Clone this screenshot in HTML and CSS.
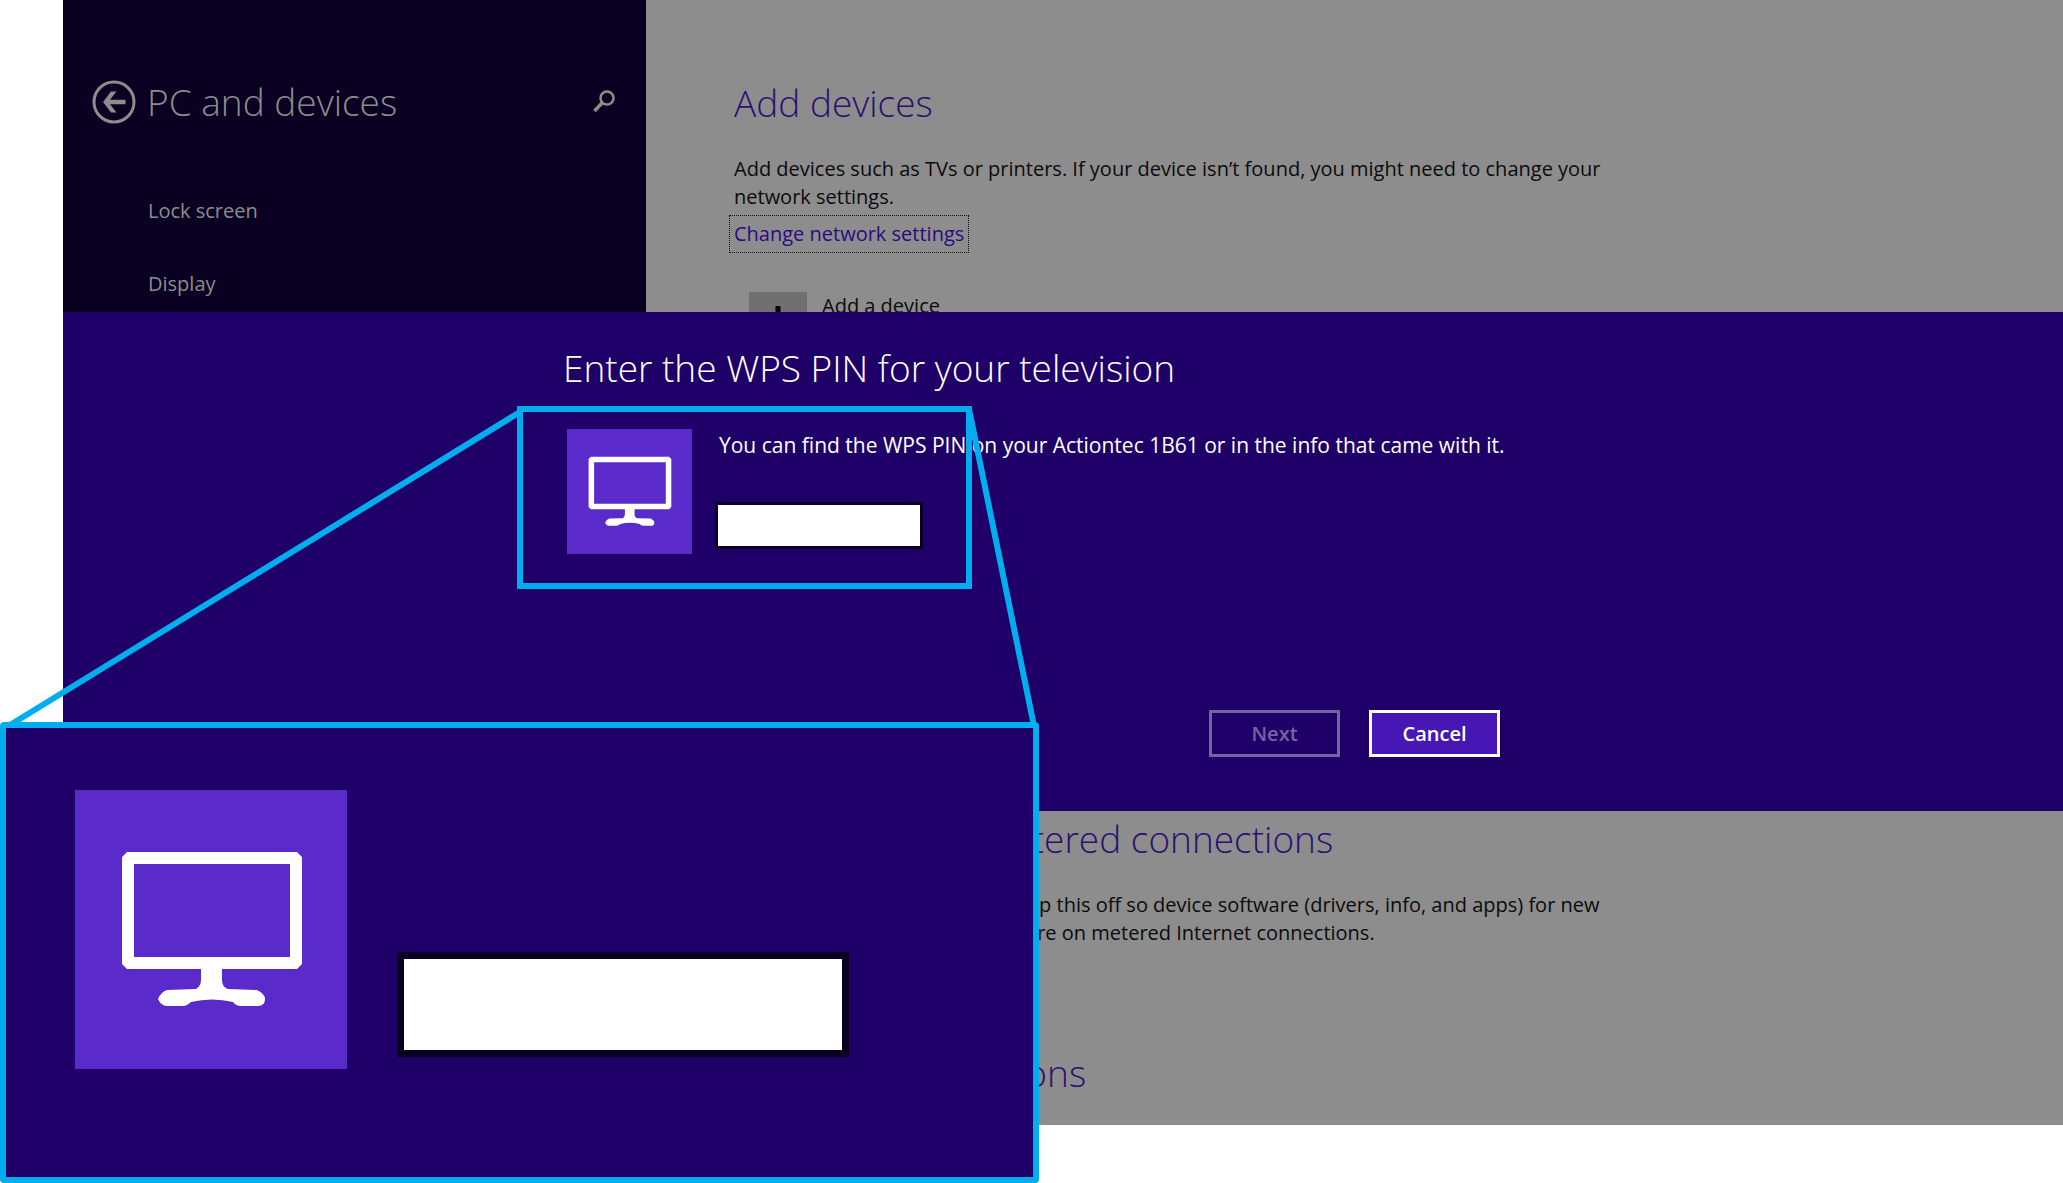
FILE: index.html
```
<!DOCTYPE html>
<html lang="en">
<head>
<meta charset="utf-8">
<title>PC and devices</title>
<link rel="stylesheet" href="styles.css">
</head>
<body>
<svg class="defs" aria-hidden="true">
  <symbol id="monitor" viewBox="0 0 272 279" preserveAspectRatio="none">
    <path fill="#fff" fill-rule="evenodd" d="M52 62H222L227 67V174L222 179H147V190Q147 197 153 199L182 200Q190 204 190 209Q190 216 183 216H166Q161 216 158 212Q137 207 116 212Q112 216 108 216H92Q86 216 83 209Q86 202 92 200L121 199Q126 196 126 190V179H52L47 174V67ZM59 74V167H215V74Z"/>
  </symbol>
</svg>
<div class="page">
  <div class="app">
    <aside class="sidebar">
      <header class="sidebar-head">
        <button class="icon-button" type="button" aria-label="Back">
          <svg width="44" height="44" viewBox="0 0 44 44" fill="none" stroke="currentColor">
            <circle cx="22" cy="22" r="20" stroke-width="3"/>
            <path fill="currentColor" stroke="none" d="M11 22L19 11.500H24.500L18 19.800H33.500V24.200H18L24.500 32.500H19Z"/>
          </svg>
        </button>
        <h1 class="heading">PC and devices</h1>
        <button class="icon-button search" type="button" aria-label="Search">
          <svg width="24" height="24" viewBox="0 0 24 24" fill="none" stroke="currentColor">
            <circle cx="15" cy="8" r="6.500" stroke-width="2.500"/>
            <path stroke-width="3.500" d="M10.500 12.500L2.500 21"/>
          </svg>
        </button>
      </header>
      <nav class="nav">
        <a href="#lock">Lock screen</a>
        <a href="#display">Display</a>
      </nav>
    </aside>
    <main class="content">
      <section>
        <h2 class="heading">Add devices</h2>
        <p>Add devices such as TVs or printers. If your device isn’t found, you might need to change your network settings.</p>
        <a class="link" href="#network">Change network settings</a>
        <button class="add" type="button">
          <span class="plus"><svg width="30" height="30" viewBox="0 0 30 30"><path d="M12.500 0H17.500V12.500H30V17.500H17.500V30H12.500V17.500H0V12.500H12.500Z"/></svg></span>
          <span>Add a device</span>
        </button>
      </section>
      <section class="metered">
        <h2 class="heading">Download over metered connections</h2>
        <p>To help prevent extra charges, keep this off so device software (drivers, info, and apps) for new devices won’t download while you’re on metered Internet connections.</p>
      </section>
      <section class="more">
        <h2 class="heading">Network connections</h2>
      </section>
    </main>
  </div>

  <div class="dialog" role="dialog" aria-labelledby="dialog-title">
    <div class="dialog-body">
      <h2 class="heading" id="dialog-title">Enter the WPS PIN for your television</h2>
      <div class="device">
        <svg class="tile"><use href="#monitor"/></svg>
        <div class="pin">
          <label for="pin">You can find the WPS PIN on your Actiontec 1B61 or in the info that came with it.</label>
          <input id="pin" type="text">
        </div>
      </div>
      <div class="actions">
        <button type="button" disabled>Next</button>
        <button type="button" class="primary">Cancel</button>
      </div>
    </div>
  </div>

  <svg class="leaders" width="1039" height="730" fill="none" stroke="#00aeef" stroke-width="6" aria-hidden="true">
    <rect x="520" y="409" width="449" height="177"/>
    <path d="M520 412L10 725M969 409L1034 726"/>
  </svg>
  <div class="magnified">
    <svg class="tile"><use href="#monitor"/></svg>
    <input type="text" aria-label="WPS PIN, enlarged">
  </div>
</div>
</body>
</html>
```
FILE: styles.css
```
* { box-sizing: border-box; }

body {
  margin: 0;
  background: #fff;
  color: #0b0b0b;
  font: 400 20px/28px "Open Sans", "Noto Sans", sans-serif;
}

h1, h2, p { margin: 0; }

button { margin: 0; font: inherit; }

.defs { position: absolute; width: 0; height: 0; }

.page { position: relative; min-height: 100vh; }

.app { display: flex; margin-left: 63px; }

.heading { font-size: 37px; font-weight: 300; line-height: 48px; }

/* sidebar */
.sidebar {
  flex: 0 0 583px;
  padding: 78px 30px 0 29px;
  background: #0a0022;
  color: #8d8d8d;
}

.sidebar-head { display: flex; align-items: center; gap: 11px; }

.icon-button {
  display: flex;
  padding: 0;
  border: 0;
  background: none;
  color: inherit;
}

.search { margin-left: auto; }

.nav {
  display: flex;
  flex-direction: column;
  gap: 45px;
  padding: 71px 0 0 56px;
}

.nav a { color: inherit; text-decoration: none; }

/* settings content */
.content {
  flex: 1;
  padding: 79px 88px 28px;
  background: #8d8d8d;
}

.content .heading { margin-bottom: 28px; color: #2c1070; }

.content p { max-width: 920px; }

.link {
  display: inline-block;
  margin-top: 9px;
  color: #2a0a80;
  text-decoration: none;
  outline: 1px dotted #111;
  outline-offset: 4px;
}

.add {
  display: flex;
  align-items: flex-start;
  gap: 15px;
  margin-top: 44px;
  padding: 0 15px;
  border: 0;
  background: none;
  color: inherit;
}

.plus {
  display: grid;
  place-items: center;
  width: 58px;
  height: 58px;
  background: #707070;
}

.metered { margin: 465px 0 0 -16px; }

.more { margin-top: 102px; }

.content .more .heading { margin-bottom: 0; }

/* dialog band */
.dialog {
  position: absolute;
  top: 312px;
  left: 63px;
  right: 0;
  padding: 32px 0 54px 500px;
  background: #1f0068;
  color: #fff;
}

.dialog-body { max-width: 937px; }

.device {
  display: flex;
  gap: 23px;
  margin-top: 37px;
  padding-left: 4px;
}

.tile { flex: none; width: 125px; height: 125px; background: #5a2acb; }

.pin {
  display: flex;
  flex-direction: column;
  gap: 43px;
  padding-top: 2px;
  font-size: 21px;
}

.pin label { padding-left: 4px; white-space: nowrap; }

input {
  width: 208px;
  height: 47px;
  border: 3px solid #0a0022;
  background: #fff;
  font: inherit;
}

.actions {
  display: flex;
  justify-content: flex-end;
  gap: 29px;
  margin-top: 156px;
}

.actions button {
  width: 131px;
  height: 47px;
  padding: 0;
  border: 3px solid #fff;
  background: #4617b4;
  color: #fff;
  font-weight: 600;
}

.actions button:disabled {
  border-color: #79629f;
  background: none;
  color: #79629f;
}

/* enlarged callout */
.leaders { position: absolute; top: 0; left: 0; }

.magnified {
  position: absolute;
  top: 722px;
  left: 0;
  display: flex;
  align-items: flex-end;
  gap: 50px;
  width: 1039px;
  padding: 62px 69px 108px;
  border: 6px solid #00aeef;
  border-radius: 4px;
  background: #1f0068;
}

.magnified .tile { width: 272px; height: 279px; }

.magnified input {
  width: 452px;
  height: 105px;
  margin-bottom: 12px;
  border-width: 7px;
}
```
